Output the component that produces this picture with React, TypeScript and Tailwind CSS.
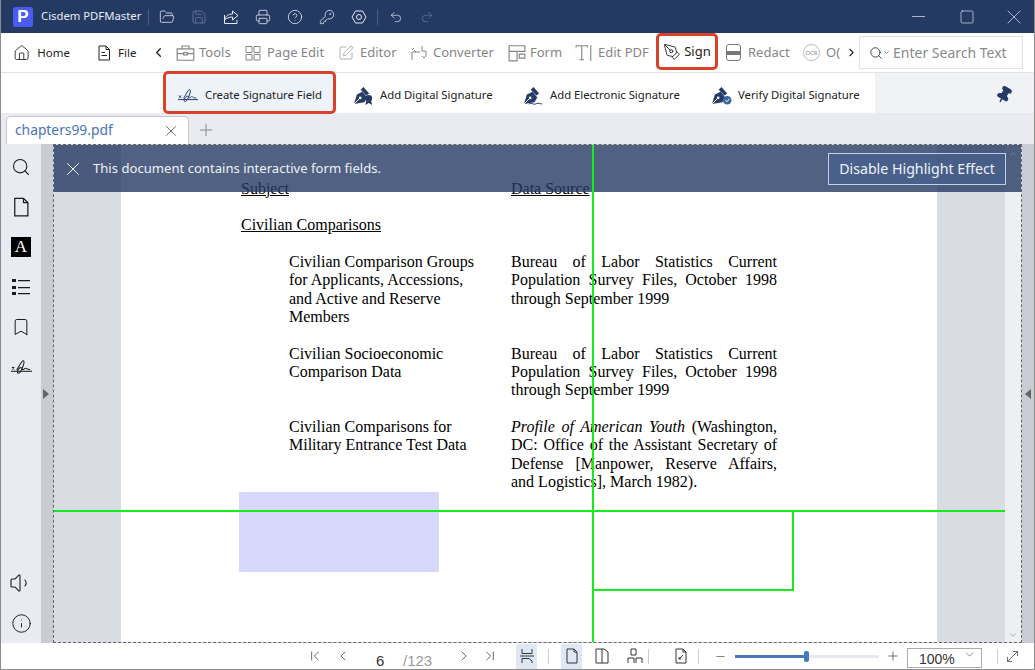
import {
  ChevronLeft,
  ChevronRight,
  ChevronDown,
  ChevronUp,
  ChevronFirst,
  ChevronLast,
  FolderOpen,
  Save,
  Printer,
  CircleHelp,
  KeyRound,
  Undo2,
  Redo2,
  Minus,
  Square,
  X,
  Plus,
  Home,
  SquarePen,
  Search,
  Bookmark,
  Volume1,
  Info,
  Pin,
  PenTool,
  MoveDiagonal,
} from "lucide-react";

const sans = { fontFamily: "'Noto Sans', 'Open Sans', sans-serif" };
const serif = { fontFamily: "'Liberation Serif', serif" };
const arial = { fontFamily: "'Liberation Sans', sans-serif" };

function SigIcon({ className }: { className?: string }) {
  return (
    <svg viewBox="0 0 22 16" className={className} fill="none" stroke="currentColor" strokeWidth="1.1">
      <path d="M0 12.5h22" />
      <path d="M1 8l2.5 2.5M3.5 8L1 10.5" />
      <path d="M6 11C9 7 11 1 13 1.5c2 .5-1 8-3 11.5-1.5 2.5-4 2-3-1 .8-2.5 3-4 4-3s.5 2 2 1.5 1.5-2 3-1 2 1.5 4 1" />
    </svg>
  );
}

function NibIcon({ badge }: { badge: "ribbon" | "line" | "check" }) {
  return (
    <svg viewBox="0 0 22 20" className="w-[21px] h-[19px] text-[#263b66] shrink-0">
      <path d="M1 19l3-10 6-3 5 6-3 5z" fill="currentColor" />
      <path d="M8 4l3-3 6 7-3 2z" fill="currentColor" />
      <path d="M1 19l6-6" stroke="white" strokeWidth="1" />
      <circle cx="7.5" cy="12.5" r="1.4" fill="white" />
      {badge === "ribbon" && (
        <>
          <circle cx="16.5" cy="13" r="3.6" fill="currentColor" />
          <path d="M14 15l-1 5 3.5-2 3.5 2-1-5z" fill="currentColor" />
        </>
      )}
      {badge === "line" && <path d="M6 19c3-2 5 1 7 0s3-1 7 0" stroke="currentColor" strokeWidth="1" fill="none" />}
      {badge === "check" && (
        <>
          <circle cx="17" cy="15" r="4.5" fill="#3f679f" />
          <path d="M15 15l1.6 1.6 2.6-3" stroke="white" strokeWidth="1" fill="none" />
        </>
      )}
    </svg>
  );
}

function Line({ d, className }: { d: string; className?: string }) {
  return (
    <svg viewBox="0 0 16 16" className={`shrink-0 ${className ?? "w-4 h-4"}`} fill="none" stroke="currentColor" strokeWidth="1">
      <path d={d} />
    </svg>
  );
}

function Tool({ icon, label, dark, className }: { icon: React.ReactNode; label: string; dark?: boolean; className?: string }) {
  return (
    <div className={`flex items-center text-[13px] shrink-0 whitespace-nowrap ${dark ? "text-[#222]" : "text-[#858585]"} ${className ?? ""}`}>
      {icon}
      <span>{label}</span>
    </div>
  );
}

function Ribbon({ icon, label, className }: { icon: React.ReactNode; label: string; className: string }) {
  return (
    <div className={`flex items-center gap-[6px] text-[11.3px] text-[#222] shrink-0 whitespace-nowrap mt-[5px] ${className}`}>
      {icon}
      <span>{label}</span>
    </div>
  );
}

// one justified line of the pdf
function JLine({ children }: { children: React.ReactNode }) {
  return <div className="text-justify [text-align-last:justify]">{children}</div>;
}

function Doc() {
  return (
    <div className="w-[816px] h-full bg-white shrink-0 pl-[120px] pt-[34.5px] text-[16px] leading-[18.3px] text-black" style={serif}>
      <div className="grid grid-cols-[270px_266px]">
        <div className="underline">Subject</div>
        <div className="underline">Data Source</div>
      </div>
      <div className="underline mt-[18.5px]">Civilian Comparisons</div>
      <div className="grid grid-cols-[270px_266px] mt-[18.5px]">
        <div className="pl-[48px]">
          Civilian Comparison Groups
          <br />
          for Applicants, Accessions,
          <br />
          and Active and Reserve
          <br />
          Members
        </div>
        <div>
          <JLine>Bureau of Labor Statistics Current</JLine>
          <JLine>Population Survey Files, October 1998</JLine>
          <div>through September 1999</div>
        </div>
      </div>
      <div className="grid grid-cols-[270px_266px] mt-[18.5px]">
        <div className="pl-[48px]">
          Civilian Socioeconomic
          <br />
          Comparison Data
        </div>
        <div>
          <JLine>Bureau of Labor Statistics Current</JLine>
          <JLine>Population Survey Files, October 1998</JLine>
          <div>through September 1999</div>
        </div>
      </div>
      <div className="grid grid-cols-[270px_266px] mt-[18.5px]">
        <div className="pl-[48px]">
          Civilian Comparisons for
          <br />
          Military Entrance Test Data
        </div>
        <div>
          <JLine>
            <i>Profile of American Youth</i> (Washington,
          </JLine>
          <JLine>DC: Office of the Assistant Secretary of</JLine>
          <JLine>Defense [Manpower, Reserve Affairs,</JLine>
          <div>and Logistics], March 1982).</div>
        </div>
      </div>
      <div className="w-[200px] h-[80px] bg-[#d6d7fb] mt-[0.5px] -ml-[2px]" />
    </div>
  );
}

export default function App() {
  return (
    <div className="w-[1035px] h-[670px] flex flex-col overflow-hidden bg-white border-x border-b border-[#8c8c8c]" style={sans}>
      {/* title bar */}
      <div className="h-[33px] bg-[#243a63] flex items-center text-white shrink-0">
        <div className="ml-[12px] w-[20px] h-[20px] rounded-[3px] bg-[#4a5cf0] flex items-center justify-center text-[17px] font-bold leading-none" style={arial}>
          P
        </div>
        <span className="ml-[8px] w-[100px] text-[11.3px] text-[#e8ecf4] whitespace-nowrap">Cisdem PDFMaster</span>
        <div className="ml-[7px] w-px h-[16px] bg-[#4a5c80]" />
        <div className="ml-[10px] flex items-center gap-[16px] text-[#e4e8f0]">
          <FolderOpen size={16} strokeWidth={1.2} />
          <Save size={16} strokeWidth={1.2} className="text-[#6c7c99]" />
          <Line d="M1.5 6v8.5H14V11M1.5 11c1-4 4-6 8-6V2L15 6.5 9.5 11V8c-3 0-6 1-8 3z" />
          <Printer size={16} strokeWidth={1.2} />
          <CircleHelp size={16} strokeWidth={1.2} />
          <KeyRound size={16} strokeWidth={1.2} />
          <Line d="M4.5 2h7L15 8l-3.5 6h-7L1 8zM8 5.5a2.500 2.500 0 1 0 0 5 2.500 2.500 0 0 0 0-5z" />
        </div>
        <div className="ml-[10px] w-px h-[16px] bg-[#4a5c80]" />
        <Undo2 size={14} strokeWidth={1.2} className="ml-[11px] text-[#e4e8f0]" />
        <Redo2 size={14} strokeWidth={1.2} className="ml-[17px] text-[#6c7c99]" />
        <div className="ml-auto flex items-center mr-[8px] text-[#e8ecf4]">
          <Minus size={21} strokeWidth={0.8} />
          <Square size={16} strokeWidth={1} className="ml-[30px]" />
          <X size={24} strokeWidth={0.7} className="ml-[27px]" />
        </div>
      </div>

      {/* main tabs */}
      <div className="h-[40px] flex items-center border-b border-[#e2e2e2] shrink-0">
        <Tool dark className="ml-[12px] w-[57px] gap-[7px] !text-[11.5px]" icon={<Home size={18} strokeWidth={1.2} />} label="Home" />
        <Tool dark className="ml-[26px] w-[40px] gap-[6px] !text-[11.5px]" icon={<Line d="M3 1h7l3.5 3.5V15H3zM10 1v3.500h3.500M5.500 7.500H9M5.500 10.500H11" />} label="File" />
        <ChevronLeft size={15} strokeWidth={2} className="ml-[15px] text-[#222] shrink-0" />
        <Tool className="ml-[10px] w-[55px] gap-[4px]" icon={<Line className="w-[19px] h-[19px]" d="M1 5h14v9.500H1zM5 5V2.500h6V5M1 9h5.500M9.500 9H15M6.500 8h3v2h-3z" />} label="Tools" />
        <Tool className="ml-[14px] w-[79px] gap-[6px]" icon={<Line d="M1 1.500h6v6H1zM9 1.500h6v6H9zM1 9.500h6V15H1zM9 9.500h6V15H9z" />} label="Page Edit" />
        <Tool className="ml-[14px] w-[59px] gap-[6px]" icon={<SquarePen size={16} strokeWidth={1} className="shrink-0" />} label="Editor" />
        <Tool className="ml-[14px] w-[83px] gap-[6px]" icon={<Line d="M1 15V7h8M3 3 1 5M5 7 3 5M11 1v5h4v5M15 11l-2 2-2-2" />} label="Converter" />
        <Tool className="ml-[14px] w-[53px] gap-[4px]" icon={<Line className="w-[18px] h-[18px]" d="M1 1.500h14v5H1zM1 6.500V15h7V6.500M10 9h5v3.500h-5z" />} label="Form" />
        <Tool className="ml-[14px] w-[75px] gap-[5px]" icon={<Line className="w-[18px] h-[18px]" d="M1 3V1.500h10V3M6 1.500V14M4 14h4M14 1v14" />} label="Edit PDF" />
        <div className="ml-[6px] -mt-[2px] w-[62px] h-[37px] rounded-[5px] border-[3px] border-[#d9412b] flex items-center justify-center gap-[3px] text-[13px] text-[#222] shrink-0">
          <PenTool size={18} strokeWidth={1.2} />
          Sign
        </div>
        <Tool className="ml-[8px] w-[64px] gap-[7px]" icon={<div className="w-[15px] h-[17px] rounded-[3px] border border-[#777] flex items-center shrink-0"><div className="w-full h-[4px] bg-[#777]" /></div>} label="Redact" />
        <Tool className="ml-[13px] w-[35px] gap-[6px]" icon={<span className="w-[17px] h-[17px] rounded-full border border-[#bbb] text-[6px] leading-none flex items-center justify-center shrink-0">OCR</span>} label="O(" />
        <ChevronRight size={13} strokeWidth={2} className="ml-[7px] text-[#222] shrink-0" />
        <div className="ml-px w-[164px] h-[33px] border border-[#e2e2e2] flex items-center shrink-0">
          <Search size={14} strokeWidth={1.4} className="ml-[9px] text-[#222]" />
          <ChevronDown size={7} className="text-[#222]" />
          <span className="ml-[3px] text-[14px] text-[#8a8a8a] whitespace-nowrap">Enter Search Text</span>
        </div>
      </div>

      {/* sign ribbon */}
      <div className="h-[40px] flex items-center bg-[#f1f2f6] shrink-0">
        <div className="w-[874px] h-full bg-white flex items-center pl-[162px] shrink-0">
          <div className="w-[173px] h-[43px] -mt-[2px] relative z-10 rounded-[5px] border-[3px] border-[#d9412b] bg-[#eef2f9] flex items-center pl-[12px] pt-[7px] gap-[7px] text-[11.3px] text-[#222] shrink-0 whitespace-nowrap">
            <SigIcon className="w-[20px] h-[15px] text-[#263b66]" />
            Create Signature Field
          </div>
          <Ribbon className="ml-[17px] w-[141px]" icon={<NibIcon badge="ribbon" />} label="Add Digital Signature" />
          <Ribbon className="ml-[29px] w-[158px]" icon={<NibIcon badge="line" />} label="Add Electronic Signature" />
          <Ribbon className="ml-[30px] w-[149px]" icon={<NibIcon badge="check" />} label="Verify Digital Signature" />
        </div>
        <Pin size={18} fill="#263b66" className="ml-[120px] mt-[3px] text-[#263b66] rotate-[30deg]" />
      </div>

      {/* doc tabs */}
      <div className="h-[31px] bg-[#e9ebf1] flex items-end shrink-0">
        <div className="ml-[5px] w-[183px] h-[28px] bg-white rounded-t-[5px] border border-b-0 border-[#c8c8c8] flex items-center pl-[8px] text-[13.8px] text-[#4a73b8]">
          chapters99.pdf
          <X size={18} strokeWidth={1} className="ml-auto mr-[8px] text-[#444]" />
        </div>
        <Plus size={20} strokeWidth={1.2} className="ml-[7px] mb-[4px] text-[#888]" />
      </div>

      {/* workspace */}
      <div className="flex-1 flex min-h-0">
        <div className="w-[40px] bg-[#e9ebf2] flex flex-col items-center pt-[13px] pb-[9px] text-[#1c1c1c] shrink-0">
          <div className="flex flex-col items-center gap-[20px]">
            <Search size={20} strokeWidth={1.3} />
            <Line className="w-5 h-5" d="M3 1h7l3.500 3.500V15H3zM10 1v3.500h3.500" />
            <div className="w-[20px] h-[20px] bg-black text-white text-[17px] leading-[20px] text-center" style={serif}>
              A
            </div>
            <svg viewBox="0 0 20 20" className="w-5 h-5" fill="currentColor">
              <path d="M1 2h4v3H1zM1 9h4v3H1zM1 15h4v3H1zM7 3h12v1.200H7zM7 10h12v1.200H7zM7 16h12v1.200H7z" />
            </svg>
            <Bookmark size={20} strokeWidth={1.2} />
            <SigIcon className="w-[21px] h-[20px]" />
          </div>
          <div className="mt-auto flex flex-col items-center gap-[18px]">
            <Volume1 size={24} strokeWidth={1.1} />
            <Info size={21} strokeWidth={1.1} />
          </div>
        </div>
        <div className="w-[12px] bg-[#c9ccd3] relative shrink-0">
          <div className="absolute top-[245px] left-[2px] w-0 h-0 border-y-[5px] border-y-transparent border-l-[6px] border-l-[#666]" />
        </div>
        <div className="flex-1 relative border-x border-y border-dashed border-[#666] bg-[#d9dce3] overflow-hidden">
          <div className="absolute inset-y-0 right-0 w-[16px] bg-[#eeeff2]" />
          <div className="flex h-full pl-[67px]">
            <Doc />
          </div>

          {/* notice bar */}
          <div className="absolute top-0 left-0 right-0 h-[47px] bg-[#243a63]/80 flex items-center text-white">
            <X size={22} strokeWidth={1} className="ml-[8px]" />
            <span className="ml-[9px] text-[13.1px] text-[#eef1f6] whitespace-nowrap">This document contains interactive form fields.</span>
            <div className="ml-auto mr-[15px] w-[178px] h-[32px] border border-[#c3cfe6] bg-[#44608f]/60 flex items-center justify-center text-[14.2px] text-[#eef1f6] whitespace-nowrap">
              Disable Highlight Effect
            </div>
          </div>

          {/* highlight guide lines */}
          <div className="absolute left-0 right-[16px] top-[365px] h-[2px] bg-[#14ec1e]" />
          <div className="absolute left-[538px] top-0 bottom-0 w-[2px] bg-[#14ec1e]" />
          <div className="absolute left-[538px] top-[365px] w-[202px] h-[81px] border-r-2 border-b-2 border-[#14ec1e]" />

          <ChevronUp size={10} className="absolute right-[3px] top-[4px] text-[#6f7d99]" />
          <ChevronDown size={10} className="absolute right-[3px] bottom-[2px] text-[#999]" />
        </div>
        <div className="w-[12px] bg-[#c9ccd3] relative shrink-0">
          <div className="absolute top-[245px] right-[3px] w-0 h-0 border-y-[5px] border-y-transparent border-r-[6px] border-r-[#666]" />
        </div>
      </div>

      {/* status bar */}
      <div className="h-[26px] shrink-0 flex items-center text-[#333]">
        <ChevronFirst size={16} strokeWidth={1.1} className="ml-[306px] shrink-0" />
        <ChevronLeft size={16} strokeWidth={1.1} className="ml-[12px] shrink-0" />
        <span className="ml-[25px] w-[9px] text-[15px] mt-[8px] leading-none" style={arial}>6</span>
        <span className="ml-[18px] w-[30px] text-[15px] mt-[8px] leading-none text-[#999]" style={arial}>/123</span>
        <ChevronRight size={16} strokeWidth={1.1} className="ml-[23px] shrink-0" />
        <ChevronLast size={16} strokeWidth={1.1} className="ml-[10px] shrink-0" />
        <div className="ml-[18px] w-[21px] h-[25px] bg-[#dfe7f5] flex items-center justify-center shrink-0">
          <Line d="M3 1v4.500h10V1M1 8h14M3 15v-4.500h7l3 2.500v2" />
        </div>
        <div className="ml-[11px] w-px h-[15px] bg-[#ccc] shrink-0" />
        <div className="ml-[12px] w-[21px] h-[25px] bg-[#dfe7f5] flex items-center justify-center shrink-0">
          <Line d="M3 1h7l3 3v11H3zM10 1v3h3" />
        </div>
        <Line className="ml-[12px] w-4 h-4" d="M2 1h8l4 3v11H2zM8 1v14" />
        <Line className="ml-[17px] w-4 h-4" d="M4 1h5v6H4zM1 15v-5h6v5M9 15v-5h6v5" />
        <div className="ml-[5px] w-px h-[15px] bg-[#ccc] shrink-0" />
        <Line className="ml-[24px] w-4 h-4" d="M3 1h7l3 3v11H3zM10 1v3h3M6 11l4-4M6 9v2h2" />
        <div className="ml-[9px] w-px h-[15px] bg-[#ccc] shrink-0" />
        <Minus size={13} strokeWidth={2} className="ml-[15px] text-[#888] shrink-0" />
        <div className="ml-[8px] w-[144px] h-[3px] bg-[#e6e8ed] relative shrink-0">
          <div className="w-[72px] h-[3px] bg-[#4a78c0]" />
          <div className="absolute left-[69px] top-[-4px] w-[5px] h-[11px] rounded-[2px] bg-[#4a78c0]" />
        </div>
        <Plus size={14} strokeWidth={1.2} className="ml-[7px] shrink-0" />
        <div className="ml-[7px] mt-[3px] w-[75px] h-[20px] border border-[#aaa] flex items-start shrink-0 pl-[11px]">
          <span className="text-[14px] leading-[15px] mt-[3px]" style={arial}>100%</span>
          <ChevronDown size={13} strokeWidth={1} className="ml-[8px] -mt-px shrink-0" />
        </div>
        <div className="ml-[15px] w-px h-[15px] bg-[#ccc] shrink-0" />
        <MoveDiagonal size={17} strokeWidth={1} className="ml-[6px] shrink-0" />
      </div>
    </div>
  );
}
